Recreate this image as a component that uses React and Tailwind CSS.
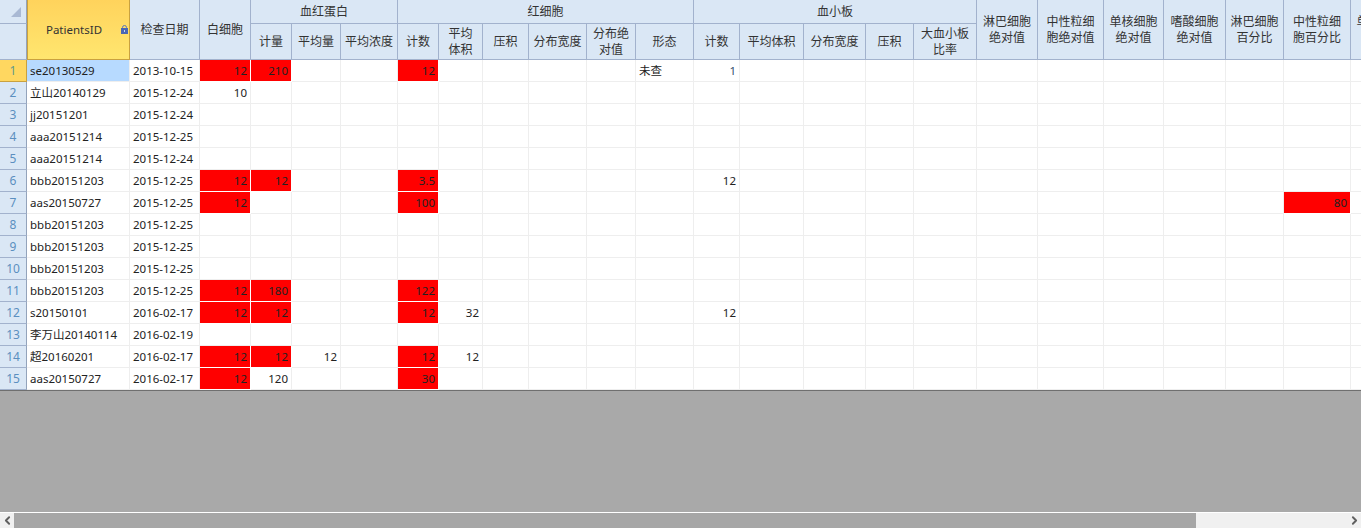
import { ChevronLeft, ChevronRight } from 'lucide-react'

const COLS = '27px 103px 70px 51px 41px 49px 57px 41px 44px 46px 58px 49px 58px 46px 64px 62px 48px 63px 61px 66px 60px 62px 58px 67px 60px'

const headCell = 'flex items-center justify-center text-center leading-[16px] bg-[#dae7f5] border-r border-b border-[#a2b2cd] text-[#333333]'

const subHeads = [
  '计量', '平均量', '平均浓度',
  '计数', '平均\n体积', '压积', '分布宽度', '分布绝\n对值', '形态',
  '计数', '平均体积', '分布宽度', '压积', '大血小板\n比率',
]

const tailHeads = ['淋巴细胞\n绝对值', '中性粒细\n胞绝对值', '单核细胞\n绝对值', '嗜酸细胞\n绝对值', '淋巴细胞\n百分比', '中性粒细\n胞百分比', '单核细胞\n百分比']

// 3 = 白细胞, 4.. = sub columns, keyed by grid column offset
const rows = [
  { id: 'se20130529', date: '2013-10-15', cells: { 3: ['12', 1], 4: ['210', 1], 7: ['12', 1], 12: ['未查', 0], 13: ['1', 0] } },
  { id: '立山20140129', date: '2015-12-24', cells: { 3: ['10', 0] } },
  { id: 'jj20151201', date: '2015-12-24', cells: {} },
  { id: 'aaa20151214', date: '2015-12-25', cells: {} },
  { id: 'aaa20151214', date: '2015-12-24', cells: {} },
  { id: 'bbb20151203', date: '2015-12-25', cells: { 3: ['12', 1], 4: ['12', 1], 7: ['3.5', 1], 13: ['12', 0] } },
  { id: 'aas20150727', date: '2015-12-25', cells: { 3: ['12', 1], 7: ['100', 1], 23: ['80', 1] } },
  { id: 'bbb20151203', date: '2015-12-25', cells: {} },
  { id: 'bbb20151203', date: '2015-12-25', cells: {} },
  { id: 'bbb20151203', date: '2015-12-25', cells: {} },
  { id: 'bbb20151203', date: '2015-12-25', cells: { 3: ['12', 1], 4: ['180', 1], 7: ['122', 1] } },
  { id: 's20150101', date: '2016-02-17', cells: { 3: ['12', 1], 4: ['12', 1], 7: ['12', 1], 8: ['32', 0], 13: ['12', 0] } },
  { id: '李万山20140114', date: '2016-02-19', cells: {} },
  { id: '超20160201', date: '2016-02-17', cells: { 3: ['12', 1], 4: ['12', 1], 5: ['12', 0], 7: ['12', 1], 8: ['12', 0] } },
  { id: 'aas20150727', date: '2016-02-17', cells: { 3: ['12', 1], 4: ['120', 0], 7: ['30', 1] } },
]

function Lines({ text }) {
  return text.split('\n').map((line, i) => <span key={i} className="block">{line}</span>)
}

function Header() {
  return (
    <div className="grid h-[60px] grid-rows-[24px_36px]" style={{ gridTemplateColumns: COLS }}>
      <div className={`${headCell} !items-start !justify-start !border-r-[#93a3bb]`}>
        <svg width="26" height="23" viewBox="0 0 26 23">
          <polygon points="21,7 21,17 11,17" fill="#a9b9d4" />
        </svg>
      </div>
      <div className="row-span-2 relative flex items-center justify-center bg-gradient-to-b from-[#ffd35c] to-[#ffe66f] border-x border-b border-[#c9a13f] text-[11.5px] text-[#333333]">
        <span className="pr-[9px]">PatientsID</span>
        <svg className="absolute right-[1px] top-[25px]" width="7" height="9" viewBox="0 0 7 9">
          <path d="M1.5 4V2.5a2 2 0 0 1 4 0V4" fill="none" stroke="#5b74b8" strokeWidth="1" />
          <rect x="0" y="3" width="7" height="6" fill="#4a66b4" />
          <rect x="3" y="5" width="1" height="2" fill="#c5d2f0" />
        </svg>
      </div>
      <div className={`${headCell} row-span-2`}>检查日期</div>
      <div className={`${headCell} row-span-2`}>白细胞</div>
      <div className={`${headCell} col-span-3`}>血红蛋白</div>
      <div className={`${headCell} col-span-6`}>红细胞</div>
      <div className={`${headCell} col-span-5`}>血小板</div>
      {tailHeads.map((t, i) => (
        <div key={i} className={`${headCell} row-span-2`}><div><Lines text={t} /></div></div>
      ))}
      <div className={`${headCell} !border-r-[#93a3bb]`} />
      {subHeads.map((t, i) => (
        <div key={i} className={headCell}><div><Lines text={t} /></div></div>
      ))}
    </div>
  )
}

function Row({ row, index }) {
  const selected = index === 0
  const cols = Array.from({ length: 22 }, (_, i) => i + 3)
  return (
    <div className="grid h-[22px] text-[11.5px]" style={{ gridTemplateColumns: COLS }}>
      <div className={`flex items-center justify-center border-r border-b text-[12px] ${selected ? 'bg-[#ffd760] border-[#c9a13f] text-[#5f9a8a]' : 'bg-[#dae7f5] border-[#a2b2cd] !border-r-[#93a3bb] text-[#5b8fc0]'}`}>
        {index + 1}
      </div>
      <div className={`flex items-center pl-[3px] border-r border-b border-[#eeeeee] whitespace-nowrap ${selected ? 'bg-[#b7daff]' : ''}`}>{row.id}</div>
      <div className="flex items-center pl-[3px] border-r border-b border-[#eeeeee] whitespace-nowrap">{row.date}</div>
      {cols.map(c => {
        const cell = row.cells[c]
        const red = cell && cell[1] === 1
        const left = c === 12
        const blue = c === 13 && index === 0
        return (
          <div
            key={c}
            className={`flex items-center pr-[3px] border-r border-b ${left ? 'justify-start pl-[3px]' : 'justify-end'} ${red ? 'bg-[#ff0000] border-white' : 'border-[#eeeeee]'} ${blue ? 'text-[#34506e]' : ''}`}
          >
            {cell ? cell[0] : ''}
          </div>
        )
      })}
    </div>
  )
}

function ScrollBar() {
  return (
    <div className="flex h-[17px] bg-[#f0f0f0] border-y border-white text-[#606060]">
      <div className="flex w-[14px] items-center justify-center">
        <ChevronLeft size={13} strokeWidth={3.5} />
      </div>
      <div className="w-[1182px] bg-[#a6a6a6]" />
      <div className="flex flex-1 items-center justify-end">
        <ChevronRight size={13} strokeWidth={3.5} />
      </div>
    </div>
  )
}

export default function App() {
  return (
    <div className="flex h-[529px] w-[1361px] flex-col overflow-hidden bg-[#a9a9a9] text-[12px] text-[#222222] [font-family:'Noto_Sans','Noto_Sans_CJK_SC',sans-serif]">
      <div className="h-[391px] overflow-hidden bg-white border-b border-[#6f6f6f]">
        <Header />
        {rows.map((row, i) => <Row key={i} row={row} index={i} />)}
      </div>
      <div className="flex-1" />
      <ScrollBar />
    </div>
  )
}
